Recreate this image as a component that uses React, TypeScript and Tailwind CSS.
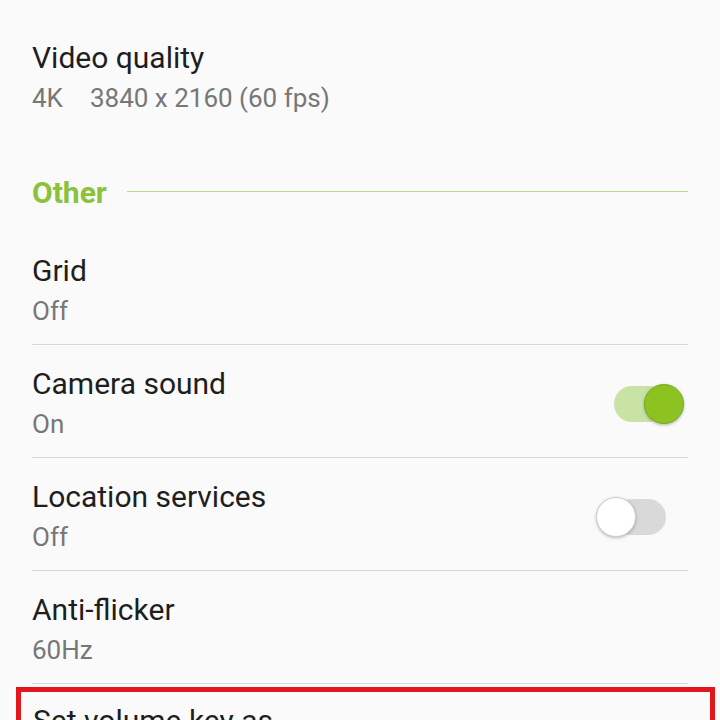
import React from 'react';

interface SettingRow {
  title: string;
  value: string;
  toggle?: boolean;
}

const ROWS: SettingRow[] = [
  { title: 'Grid', value: 'Off' },
  { title: 'Camera sound', value: 'On', toggle: true },
  { title: 'Location services', value: 'Off', toggle: false },
  { title: 'Anti-flicker', value: '60Hz' },
];

const Toggle: React.FC<{ on: boolean }> = ({ on }) => (
  <div className="relative w-[88px] h-[40px] mr-[4px] shrink-0">
    <div
      className={`absolute left-[18px] right-[18px] top-[2px] bottom-[2px] rounded-full ${
        on ? 'bg-[#c8e3a4]' : 'bg-[#d9d9d9]'
      }`}
    />
    {on ? (
      <div className="absolute right-0 top-0 w-[40px] h-[40px] rounded-full bg-[#8cc320] border border-[#7aae1a] shadow-[0_1px_3px_rgba(0,0,0,0.3)]" />
    ) : (
      <div className="absolute left-0 top-0 w-[40px] h-[40px] rounded-full bg-white border border-[#cfcfcf] shadow-[0_1px_3px_rgba(0,0,0,0.25)]" />
    )}
  </div>
);

export default function App() {
  return (
    <div className="min-h-[720px] h-[720px] overflow-hidden bg-[#fafafa] px-8 font-['Roboto','Liberation_Sans',sans-serif]">
      {/* Video quality */}
      <div className="pt-[38px]">
        <div className="text-[30px] leading-[40px] text-[#1e1e1e]">Video quality</div>
        <div className="text-[26px] leading-[40px] text-[#777777]">
          4K<span className="ml-[27px]">3840 x 2160 (60 fps)</span>
        </div>
      </div>

      {/* Section header */}
      <div className="mt-[55px] h-[40px] flex items-start">
        <span className="text-[30px] leading-[40px] font-bold text-[#8ac23a]">Other</span>
        <div className="flex-1 h-px bg-[#b9d98d] mt-[18px] ml-[20px]" />
      </div>

      <div className="mt-[19px]">
        {ROWS.map((row) => (
          <div
            key={row.title}
            className="flex items-center pt-[19px] pb-[13px] border-b border-[#d8d8d8]"
          >
            <div className="flex-1">
              <div className="text-[30px] leading-[40px] text-[#1e1e1e]">{row.title}</div>
              <div className="text-[26px] leading-[40px] text-[#777777]">{row.value}</div>
            </div>
            {row.toggle !== undefined && <Toggle on={row.toggle} />}
          </div>
        ))}

        {/* Highlighted row */}
        <div className="mt-[3px] ml-[-16px] mr-[-27px] border-[5px] border-[#e2161d] pl-[12px] pt-[9px] pb-[20px]">
          <div className="text-[30px] leading-[40px] text-[#1e1e1e]">Set volume key as</div>
          <div className="text-[26px] leading-[40px] text-[#777777]">Take pictures</div>
        </div>
      </div>
    </div>
  );
}
